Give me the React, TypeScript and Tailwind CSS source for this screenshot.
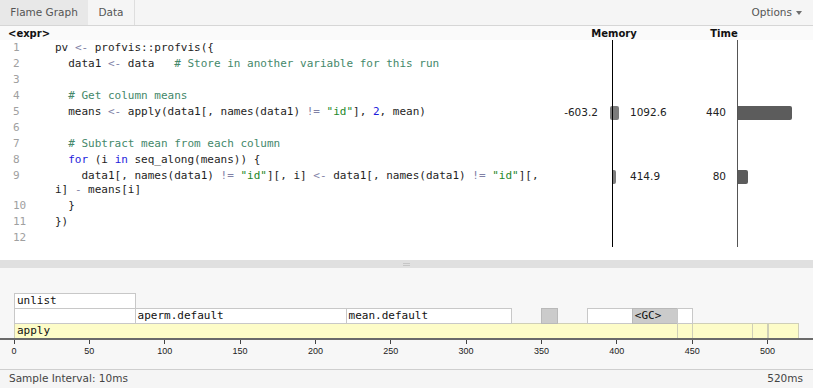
type Tok = [string, string?];

const code: Tok[][][] = [
  [[["pv "], ["<-", "op"], [" profvis::profvis({"]]],
  [[["  data1 "], ["<-", "op"], [" data   "], ["# Store in another variable for this run", "com"]]],
  [[]],
  [[["  "], ["# Get column means", "com"]]],
  [[["  means "], ["<-", "op"], [" apply(data1[, names(data1) "], ["!=", "op"], [" "], ['"id"', "str"], ["], "], ["2", "num"], [", mean)"]]],
  [[]],
  [[["  "], ["# Subtract mean from each column", "com"]]],
  [[["  "], ["for", "kw"], [" (i "], ["in", "kw"], [" seq_along(means)) {"]]],
  [
    [["    data1[, names(data1) "], ["!=", "op"], [" "], ['"id"', "str"], ["][, i] "], ["<-", "op"], [" data1[, names(data1) "], ["!=", "op"], [" "], ['"id"', "str"], ["][,"]],
    [["i] "], ["-", "op"], [" means[i]"]],
  ],
  [[["  }"]]],
  [[["})"]]],
  [[]],
]

// memory / time figures per line (1-based)
const stats: Record<number, { neg?: string; negBar: number; posBar: number; mem: string; time: string; timeBar: number }> = {
  5: { neg: "-603.2", negBar: 2, posBar: 6, mem: "1092.6", time: "440", timeBar: 54 },
  9: { negBar: 0, posBar: 3, mem: "414.9", time: "80", timeBar: 10 },
}

const tokColor: Record<string, string> = {
  op: "text-[#8181a6]",
  com: "text-[#44886a]",
  str: "text-[#23882a]",
  num: "text-[#1c1cdc]",
  kw: "text-[#1c1cdc]",
}

type Cell = { row: number; start: number; end: number; label?: string; kind: "yellow" | "white" | "gray" }

const cells: Cell[] = [
  { row: 0, start: 0, end: 440, label: "apply", kind: "yellow" },
  { row: 0, start: 440, end: 450, kind: "yellow" },
  { row: 0, start: 450, end: 490, kind: "yellow" },
  { row: 0, start: 490, end: 500, kind: "yellow" },
  { row: 0, start: 500, end: 520, kind: "yellow" },
  { row: 1, start: 0, end: 80, kind: "white" },
  { row: 1, start: 80, end: 220, label: "aperm.default", kind: "white" },
  { row: 1, start: 220, end: 330, label: "mean.default", kind: "white" },
  { row: 1, start: 350, end: 360, kind: "gray" },
  { row: 1, start: 380, end: 410, kind: "white" },
  { row: 1, start: 410, end: 440, label: "<GC>", kind: "gray" },
  { row: 1, start: 440, end: 450, kind: "white" },
  { row: 2, start: 0, end: 80, label: "unlist", kind: "white" },
]

const px = (ms: number) => 14 + ms * 1.507
const rowTop = [55, 40, 25]
const ticks = [0, 50, 100, 150, 200, 250, 300, 350, 400, 450, 500]

const ui = "font-['DejaVu_Sans',sans-serif]"
const mono = "font-['DejaVu_Sans_Mono',monospace]"

function CodeRow({ n, lines }: { n: number; lines: Tok[][] }) {
  const s = stats[n]
  return (
    <div className="flex">
      <div className={`w-[55px] shrink-0 pl-[13px] pt-[1px] leading-[14px] text-[11px] text-[#a0a0a0] ${mono}`}>{n}</div>
      <div className={`w-[490px] shrink-0 pt-[1px] pb-[1px] leading-[14px] text-[11px] text-[#1e1e1e] whitespace-pre ${mono}`}>
        {lines.map((line, i) => (
          <div key={i} className="h-[14px]">
            {line.map(([txt, kind], j) => (
              <span key={j} className={kind ? tokColor[kind] : ""}>{txt}</span>
            ))}
          </div>
        ))}
      </div>
      <div className={`w-[53px] shrink-0 pt-[1px] text-right leading-[14px] text-[10.5px] text-[#222] ${ui}`}>{s?.neg}</div>
      <div className="w-[14px] shrink-0 flex justify-end items-start pt-[2px]">
        {s && s.negBar > 0 && <div className="h-[14px] bg-[#7c7c7c] rounded-l-[2px]" style={{ width: s.negBar }} />}
      </div>
      <div className="w-[18px] shrink-0 border-l border-black flex items-start pt-[2px]">
        {s && <div className="h-[14px] bg-[#7c7c7c] rounded-r-[2px]" style={{ width: s.posBar }} />}
      </div>
      <div className={`w-[50px] shrink-0 pt-[1px] leading-[14px] text-[10.5px] text-[#222] ${ui}`}>{s?.mem}</div>
      <div className={`w-[57px] shrink-0 pt-[1px] pr-[11px] text-right leading-[14px] text-[10.5px] text-[#222] ${ui}`}>{s?.time}</div>
      <div className="flex-1 border-l border-[#555] flex items-start pt-[2px]">
        {s && <div className="h-[14px] bg-[#5c5c5c] rounded-r-[2px]" style={{ width: s.timeBar }} />}
      </div>
    </div>
  )
}

export default function App() {
  return (
    <div className={`w-[813px] h-[388px] bg-white overflow-hidden flex flex-col ${ui}`}>
      <div className="h-[26px] shrink-0 flex bg-[#f5f5f5] border-b border-[#d6d6d6] text-[10.5px] text-[#555]">
        <div className="w-[88px] flex items-center justify-center bg-[#e8e8e8]">Flame Graph</div>
        <div className="w-[47px] flex items-center justify-center border-r border-[#dedede]">Data</div>
        <div className="flex-1" />
        <div className="flex items-center gap-[4px] pr-[11px]">
          Options
          <span className="w-0 h-0 border-l-[3px] border-r-[3px] border-t-[4px] border-l-transparent border-r-transparent border-t-[#6e6e6e]" />
        </div>
      </div>

      <div className="h-[14px] shrink-0 flex items-center bg-[#fafafa] text-[10px] font-bold text-[#111]">
        <div className="w-[589px] pl-[8px]">&lt;expr&gt;</div>
        <div className="w-[50px] text-center">Memory</div>
        <div className="w-[69px]" />
        <div className="w-[32px] text-center">Time</div>
      </div>

      <div className="shrink-0">
        {code.map((lines, i) => (
          <CodeRow key={i} n={i + 1} lines={lines} />
        ))}
        <div className="flex h-[1px]">
          <div className="w-[612px] shrink-0" />
          <div className="w-[125px] shrink-0 border-l border-black" />
          <div className="flex-1 border-l border-[#555]" />
        </div>
      </div>

      <div className="h-[13px] shrink-0" />

      <div className="h-[8px] shrink-0 bg-[#e0e0e0] flex flex-col items-center justify-center gap-[1px]">
        <div className="w-[7px] h-[1px] bg-[#c6c6c6]" />
        <div className="w-[7px] h-[1px] bg-[#c6c6c6]" />
      </div>

      <div className="relative h-[101px] shrink-0 bg-[#f7f7f7]">
        {cells.map((c, i) => (
          <div
            key={i}
            className={`absolute h-[16px] border overflow-hidden whitespace-pre pl-[2px] leading-[14px] text-[11px] text-[#111] ${mono} ${
              c.kind === "yellow"
                ? "bg-[#fdfcc8] border-[#cfcfb8]"
                : c.kind === "gray"
                ? "bg-[#cbcbcb] border-[#b9b9b9]"
                : "bg-white border-[#c8c8c8]"
            }`}
            style={{ left: px(c.start), width: px(c.end) - px(c.start) + 1, top: rowTop[c.row] }}
          >
            {c.label}
          </div>
        ))}
        <div className="absolute left-0 right-0 top-[70px] h-[2px] bg-[#6a6a6a]" />
        {ticks.map((t) => (
          <div key={t} className="absolute top-[72px] w-[30px] -ml-[15px] flex flex-col items-center" style={{ left: px(t) }}>
            <div className="w-[1px] h-[4px] bg-[#444]" />
            <div className="mt-[2px] text-[9px] leading-[10px] text-[#222] font-['Liberation_Sans',sans-serif]">{t}</div>
          </div>
        ))}
      </div>

      <div className="flex-1 flex items-center justify-between border-t border-[#cfcfcf] bg-[#f5f5f5] px-[9px] text-[10.5px] text-[#444]">
        <span>Sample Interval: 10ms</span>
        <span className="pr-[1px]">520ms</span>
      </div>
    </div>
  )
}
